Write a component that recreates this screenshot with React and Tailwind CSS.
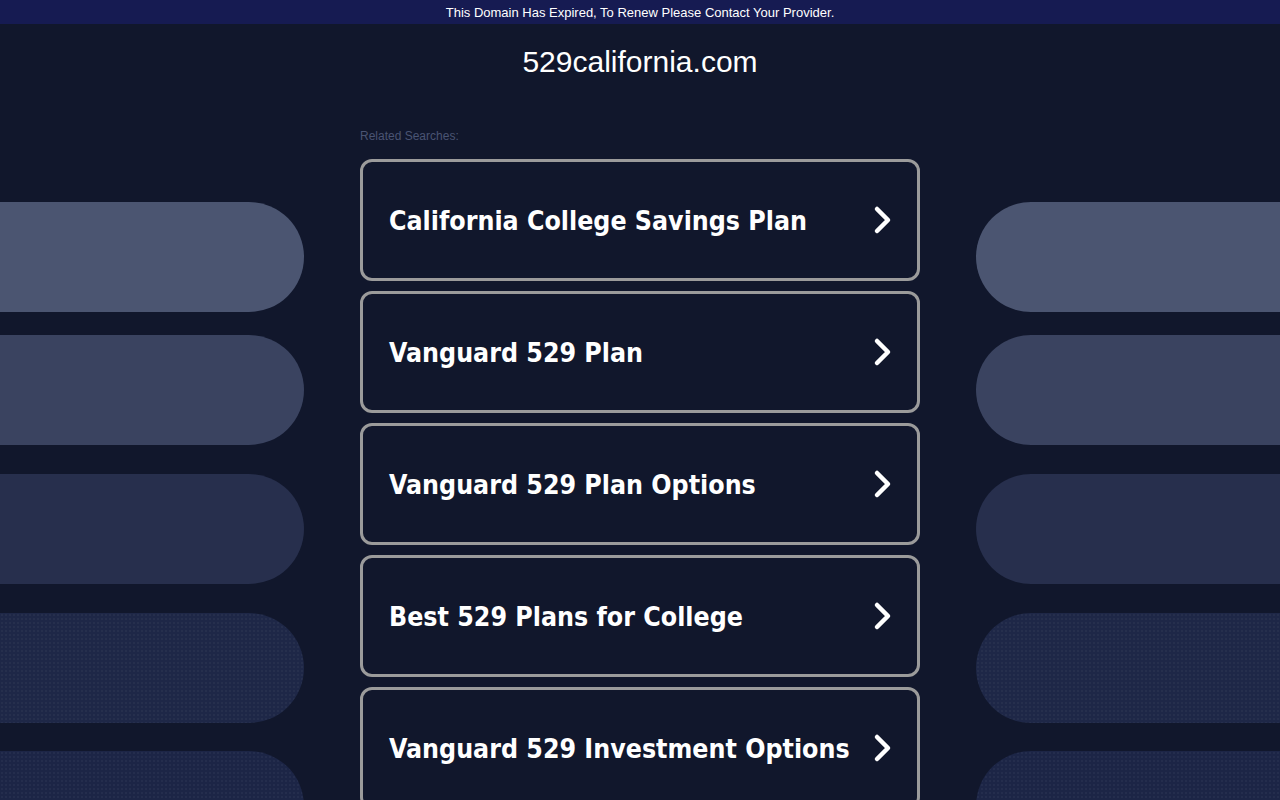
import React from 'react';

const searches = [
  'California College Savings Plan',
  'Vanguard 529 Plan',
  'Vanguard 529 Plan Options',
  'Best 529 Plans for College',
  'Vanguard 529 Investment Options',
];

const pills = [
  { color: 'bg-[#4b5571]', mt: 'mt-0', dots: false },
  { color: 'bg-[#3a4360]', mt: 'mt-[23px]', dots: false },
  { color: 'bg-[#272f4d]', mt: 'mt-[29px]', dots: false },
  { color: 'bg-[#1e2747]', mt: 'mt-[29px]', dots: true },
  { color: 'bg-[#1c2546]', mt: 'mt-[28px]', dots: true },
];

const Chevron = () => (
  <svg width="20" height="30" viewBox="0 0 20 30" fill="none" className="shrink-0">
    <polyline points="4,4 15,15 4,26" stroke="white" strokeWidth="4.5" strokeLinecap="round" strokeLinejoin="round" />
  </svg>
);

const PillColumn = ({ side }) => (
  <div className="w-[304px] shrink-0 pt-[103px] flex flex-col">
    {pills.map((pill, index) => (
      <div
        key={index}
        className={`h-[110px] shrink-0 ${pill.color} ${pill.mt} ${side === 'left' ? 'rounded-r-[55px]' : 'rounded-l-[55px]'}`}
        style={pill.dots ? { backgroundImage: 'radial-gradient(rgba(255,255,255,0.035) 1px, transparent 1px)', backgroundSize: '4px 4px' } : undefined}
      />
    ))}
  </div>
);

export default function App() {
  return (
    <div className="w-[1280px] h-[800px] overflow-hidden bg-[#11172c] font-['Liberation_Sans',Arial,sans-serif]">
      <div className="h-[24px] bg-[#161b52] flex items-center justify-center text-white text-[13px] pt-[1px]">
        This Domain Has Expired, To Renew Please Contact Your Provider.
      </div>

      <div className="h-[75px] flex items-center justify-center">
        <h1 className="text-white text-[30px] leading-none">529california.com</h1>
      </div>

      <div className="flex gap-[56px]">
        <PillColumn side="left" />

        <div className="w-[560px] shrink-0 pt-[31px]">
          <p className="text-[12px] text-[#4a5473] leading-none mb-[17px]">Related Searches:</p>
          <div className="flex flex-col gap-[10px]">
            {searches.map((label) => (
              <a
                key={label}
                href="#"
                className="h-[122px] border-[3px] border-[#9b9b9b] rounded-[12px] flex items-center justify-between pl-[26px] pr-[24px]"
              >
                <span className="text-white font-bold text-[26.5px] pt-[2px] font-['DejaVu_Sans_Condensed','DejaVu_Sans',sans-serif]">
                  {label}
                </span>
                <Chevron />
              </a>
            ))}
          </div>
        </div>

        <PillColumn side="right" />
      </div>
    </div>
  );
}
